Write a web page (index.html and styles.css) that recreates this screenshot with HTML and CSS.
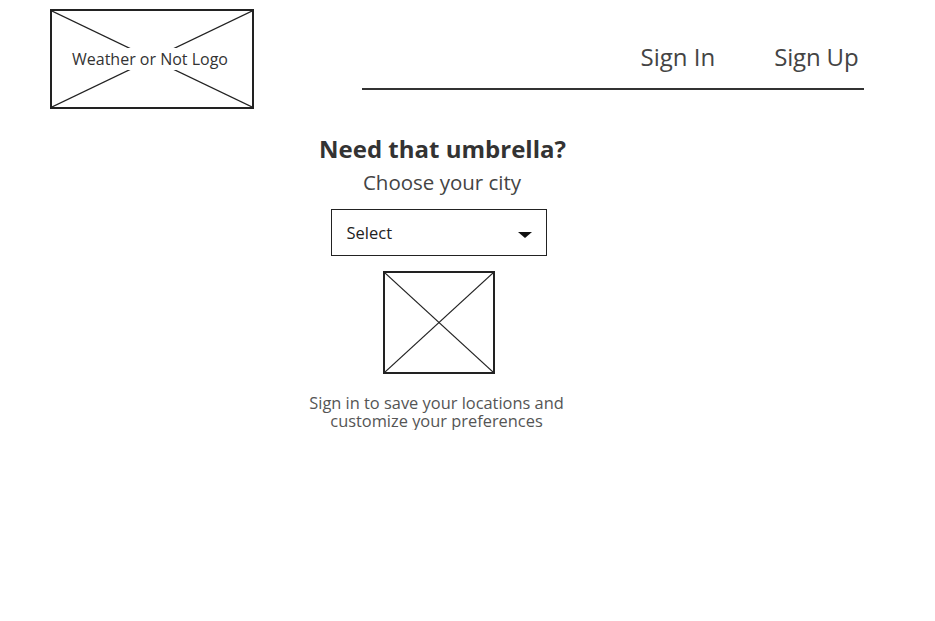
FILE: index.html
```html
<!DOCTYPE html>
<html>
<head>
<meta charset="utf-8">
<link rel="stylesheet" href="styles.css">
</head>
<body>
<header class="header">
  <div class="logo">
    <svg class="x-lines" viewBox="0 0 100 100" preserveAspectRatio="none">
      <line x1="0" y1="0" x2="100" y2="100" vector-effect="non-scaling-stroke"/>
      <line x1="100" y1="0" x2="0" y2="100" vector-effect="non-scaling-stroke"/>
    </svg>
    <span class="logo-text">Weather or Not Logo</span>
  </div>
  <nav class="nav">
    <a class="nav-link" href="#">Sign In</a>
    <a class="nav-link" href="#">Sign Up</a>
  </nav>
</header>
<main class="main">
  <h1 class="title">Need that umbrella?</h1>
  <p class="subtitle">Choose your city</p>
  <div class="select">
    <span>Select</span>
    <span class="caret"></span>
  </div>
  <div class="image">
    <svg class="x-lines" viewBox="0 0 100 100" preserveAspectRatio="none">
      <line x1="0" y1="0" x2="100" y2="100" vector-effect="non-scaling-stroke"/>
      <line x1="100" y1="0" x2="0" y2="100" vector-effect="non-scaling-stroke"/>
    </svg>
  </div>
  <p class="note"><span class="note-line">Sign in to save your locations and</span><span class="note-line">customize your preferences</span></p>
</main>
</body>
</html>
```
FILE: styles.css
```css
* { box-sizing: border-box; }
body {
  margin: 0;
  background: #fff;
  font-family: "Open Sans", "Lato", sans-serif;
  color: #333;
}
.header {
  display: flex;
  align-items: flex-start;
  padding: 9px 0 0 50px;
}
.logo {
  position: relative;
  width: 204px;
  height: 100px;
  border: 2px solid #222;
  display: flex;
  align-items: center;
  justify-content: center;
}
.x-lines {
  position: absolute;
  inset: 0;
  width: 100%;
  height: 100%;
}
.x-lines line {
  stroke: #222;
  stroke-width: 1.2;
}
.logo-text {
  position: relative;
  background: #fff;
  font-size: 16px;
  color: #333;
  padding: 0 1px;
  margin-right: 4px;
}
.nav {
  margin-left: 108px;
  width: 502px;
  height: 81px;
  border-bottom: 2px solid #333;
  display: flex;
  justify-content: flex-end;
  align-items: flex-end;
  gap: 59px;
  padding: 0 5.5px 19px 0;
}
.nav-link {
  font-size: 24px;
  color: #444;
  text-decoration: none;
  line-height: 24px;
}
.nav-link:last-child {
  letter-spacing: -0.15px;
}
.main {
  width: 260px;
  margin: 26px 0 0 309px;
  display: flex;
  flex-direction: column;
  align-items: center;
}
.title {
  margin: 0;
  font-size: 24px;
  font-weight: 700;
  color: #333;
  line-height: 28px;
  white-space: nowrap;
  transform: translateX(3.5px);
}
.subtitle {
  margin: 6px 0 0;
  font-size: 20.5px;
  color: #444;
  line-height: 26px;
  white-space: nowrap;
  transform: translateX(3px);
}
.select {
  margin-top: 14px;
  width: 216px;
  height: 47px;
  border: 1.5px solid #222;
  display: flex;
  align-items: center;
  justify-content: space-between;
  padding: 0 14.5px 0 14.5px;
  font-size: 16.5px;
  color: #222;
}
.caret {
  width: 0;
  height: 0;
  border-left: 7.5px solid transparent;
  border-right: 7.5px solid transparent;
  border-top: 6px solid #111;
  margin-top: 5px;
}
.image {
  position: relative;
  margin-top: 15px;
  width: 112px;
  height: 103px;
  border: 2px solid #222;
}
.note {
  margin: 20px 0 0;
  font-size: 16.4px;
  text-align: center;
  color: #555;
  white-space: nowrap;
  transform: translateX(-2.5px);
  display: flex;
  flex-direction: column;
  align-items: center;
}
.note-line {
  display: block;
  line-height: 18px;
}
```
